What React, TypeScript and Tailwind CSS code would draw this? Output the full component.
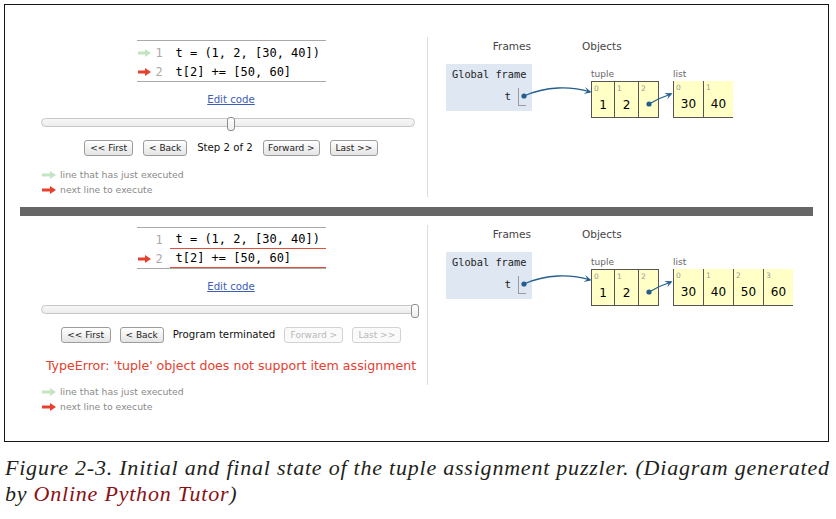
import clsx from 'clsx';

const SANS = "font-['DejaVu_Sans',sans-serif]";
const MONO = "font-['DejaVu_Sans_Mono',monospace]";

function LineArrow({ color }: { color: string }) {
  return (
    <svg width="13" height="8" viewBox="0 0 13 8" className="block">
      <rect x="0" y="2.5" width="8" height="3" fill={color} />
      <polygon points="7,0 13,4 7,8" fill={color} />
    </svg>
  );
}

const GREEN = '#c4e5c1';
const RED = '#e6402f';

function CodeTable({ final }: { final: boolean }) {
  const lines = ['t = (1, 2, [30, 40])', 't[2] += [50, 60]'];
  return (
    <div className={clsx('w-[189px] border-y border-[#a9a9a9] pt-[2px] text-[12px]', MONO)}>
      {lines.map((l, i) => (
        <div key={i} className="flex h-[19px] items-stretch">
          <div className="w-[18px] pl-[1px] flex items-center">
            {i === 0 && !final ? <LineArrow color={GREEN} /> : null}
            {i === 1 ? <LineArrow color={RED} /> : null}
          </div>
          <div className="w-[15px] flex items-center pl-[1px] text-[#aaa]">{i + 1}</div>
          <div className={clsx('flex-1 flex items-center pl-[6px] text-black whitespace-pre', final && 'border-b border-[#e0503f]')}>
            {l}
          </div>
        </div>
      ))}
    </div>
  );
}

function Btn({ label, w, disabled }: { label: string; w: string; disabled?: boolean }) {
  return (
    <div
      className={clsx(
        'h-[16px] rounded-[3px] border flex items-center justify-center text-[9px] leading-none whitespace-pre',
        w,
        disabled
          ? 'border-[#d2d2d2] text-[#b8b8b8] bg-[#fafafa]'
          : 'border-[#9c9c9c] text-[#222] bg-linear-to-b from-white to-[#e4e4e4]'
      )}
    >
      {label}
    </div>
  );
}

function Slider({ end }: { end: boolean }) {
  return (
    <div className="relative self-start ml-[6px] w-[378px] h-[14px]">
      <div className="absolute left-0 top-[1px] w-[374px] h-[9px] rounded-full border border-[#c6c6c6] bg-linear-to-b from-[#f7f7f7] to-[#ececec]" />
      <div
        className={clsx(
          'absolute top-0 w-[8px] h-[14px] rounded-[3px] border border-[#8e8e8e] bg-linear-to-b from-white to-[#eee]',
          end ? 'left-[370px]' : 'left-[186px]'
        )}
      />
    </div>
  );
}

function Legend() {
  return (
    <div className="self-start ml-[7px] text-[9.3px] text-[#8a8a8a]">
      <div className="flex items-center h-[15px] gap-[4px]">
        <svg width="14" height="8" viewBox="0 0 14 8" className="block">
          <rect x="0" y="2.5" width="9" height="3" fill={GREEN} />
          <polygon points="8,0 14,4 8,8" fill={GREEN} />
        </svg>
        <span>line that has just executed</span>
      </div>
      <div className="flex items-center h-[15px] gap-[4px]">
        <svg width="14" height="8" viewBox="0 0 14 8" className="block">
          <rect x="0" y="2.5" width="9" height="3" fill={RED} />
          <polygon points="8,0 14,4 8,8" fill={RED} />
        </svg>
        <span>next line to execute</span>
      </div>
    </div>
  );
}

function Cell({ idx, value, w, list }: { idx: number; value?: string; w: string; list?: boolean }) {
  return (
    <div className={clsx('relative h-full', w, idx > 0 || list ? 'border-l border-[#555]' : '')}>
      <span className="absolute left-[2px] top-[3px] text-[7.5px] leading-none text-[#9a9a9a]">{idx}</span>
      {value ? (
        <span className="absolute left-0 right-0 top-[16px] text-center text-[12px] leading-[14px] text-black">{value}</span>
      ) : null}
    </div>
  );
}

function Viz({ list }: { list: string[] }) {
  return (
    <div className={clsx('relative h-[160px] flex-1 border-l border-[#dddddd] pl-[18px]', SANS)}>
      <div className="mt-[3px] flex h-[12px] items-center text-[10.5px] leading-none text-[#444]">
        <span className="w-[86px] text-right pr-[1px]">Frames</span>
        <span className="ml-[50px]">Objects</span>
      </div>
      <div className="mt-[12px] flex items-start">
        <div className="w-[86px] h-[47px] bg-[#dfe7f3] pt-[5px]">
          <div className={clsx('pl-[6px] text-[10.3px] leading-[11px] text-[#222]', MONO)}>Global frame</div>
          <div className="mt-[8px] flex justify-end items-start">
            <span className={clsx('mt-[3px] text-[11px] leading-[12px] text-[#222]', MONO)}>t</span>
            <span className="ml-[7px] mr-[6px] w-[8px] h-[18px] border-l border-b border-[#9a9a9a]" />
          </div>
        </div>
        <div className="ml-[59px]">
          <div className="mt-[5px] h-[10px] text-[9px] leading-[10px] text-[#666]">tuple</div>
          <div className="mt-[2px] flex h-[37px] border border-[#555] bg-[#ffffc6]">
            <Cell idx={0} value="1" w="w-[22px]" />
            <Cell idx={1} value="2" w="w-[24px]" />
            <Cell idx={2} w="w-[20px]" />
          </div>
        </div>
        <div className="ml-[14px]">
          <div className="mt-[5px] h-[10px] text-[9px] leading-[10px] text-[#666]">list</div>
          <div className="mt-[2px] flex h-[37px] border-b border-[#555] bg-[#ffffc6]">
            {list.map((v, i) => (
              <Cell key={i} idx={i} value={v} w="w-[30px]" list />
            ))}
          </div>
        </div>
      </div>
      <svg className="absolute left-0 top-0 pointer-events-none" width="400" height="160">
        <path d="M96,59 C118,49 143,49 162,55" fill="none" stroke="#225e8f" strokeWidth="1.3" />
        <polygon points="163.5,55.3 155.6,56.9 159.5,54.2 157.2,50.1" fill="#225e8f" />
        <circle cx="96" cy="59" r="2.6" fill="#225e8f" />
        <path d="M221,67 Q231,61 243,57" fill="none" stroke="#225e8f" strokeWidth="1.3" />
        <polygon points="244.5,56.3 239.3,62.3 240.6,58.2 236.3,55.9" fill="#225e8f" />
        <circle cx="221" cy="67" r="2.6" fill="#225e8f" />
      </svg>
    </div>
  );
}

function Panel({ final }: { final: boolean }) {
  return (
    <div className={clsx('flex items-start', final ? 'pt-[9px] h-[225px]' : 'pt-[32px] h-[202px]')}>
      <div className={clsx('w-[422px] pl-[30px] flex flex-col items-center', SANS)}>
        <div className={final ? 'mt-[2px]' : 'mt-[3px]'}>
          <CodeTable final={final} />
        </div>
        <div className="mt-[11px] text-[10.2px] leading-[14px] text-[#3d5db4] underline">Edit code</div>
        <div className="mt-[10px] self-stretch flex">
          <Slider end={final} />
        </div>
        {final ? (
          <div className="mt-[9px] flex items-center gap-[9px]">
            <Btn label="<< First" w="w-[50px]" />
            <Btn label="< Back" w="w-[44px]" />
            <span className="text-[10.2px] text-[#111]">Program terminated</span>
            <Btn label="Forward >" w="w-[59px]" disabled />
            <Btn label="Last >>" w="w-[49px]" disabled />
          </div>
        ) : (
          <div className="mt-[9px] flex items-center gap-[10px]">
            <Btn label="<< First" w="w-[49px]" />
            <Btn label="< Back" w="w-[44px]" />
            <span className="text-[10.2px] text-[#111]">Step 2 of 2</span>
            <Btn label="Forward >" w="w-[57px]" />
            <Btn label="Last >>" w="w-[48px]" />
          </div>
        )}
        {final ? (
          <div className="mt-[15px] text-[12.6px] leading-[16px] text-[#e6402f] whitespace-nowrap">
            TypeError: 'tuple' object does not support item assignment
          </div>
        ) : null}
        <div className={clsx('self-stretch flex', final ? 'mt-[10px]' : 'mt-[11px]')}>
          <Legend />
        </div>
      </div>
      <Viz list={final ? ['30', '40', '50', '60'] : ['30', '40']} />
    </div>
  );
}

export default function App() {
  return (
    <div className="w-[836px] h-[519px] bg-white overflow-hidden">
      <div className="ml-[4px] mt-[4px] w-[825px] h-[438px] border border-[#151515]">
        <Panel final={false} />
        <div className="ml-[15px] w-[793px] h-[9px] bg-[#666666]" />
        <Panel final />
      </div>
      <div className="ml-[5px] mt-[13px] font-['Liberation_Serif',serif] italic text-[22px] leading-[26px] tracking-[0.78px] text-[#231f20] whitespace-nowrap">
        Figure 2-3. Initial and final state of the tuple assignment puzzler. (Diagram generated
        <br />
        by <span className="text-[#8b1116]">Online Python Tutor</span>)
      </div>
    </div>
  );
}
